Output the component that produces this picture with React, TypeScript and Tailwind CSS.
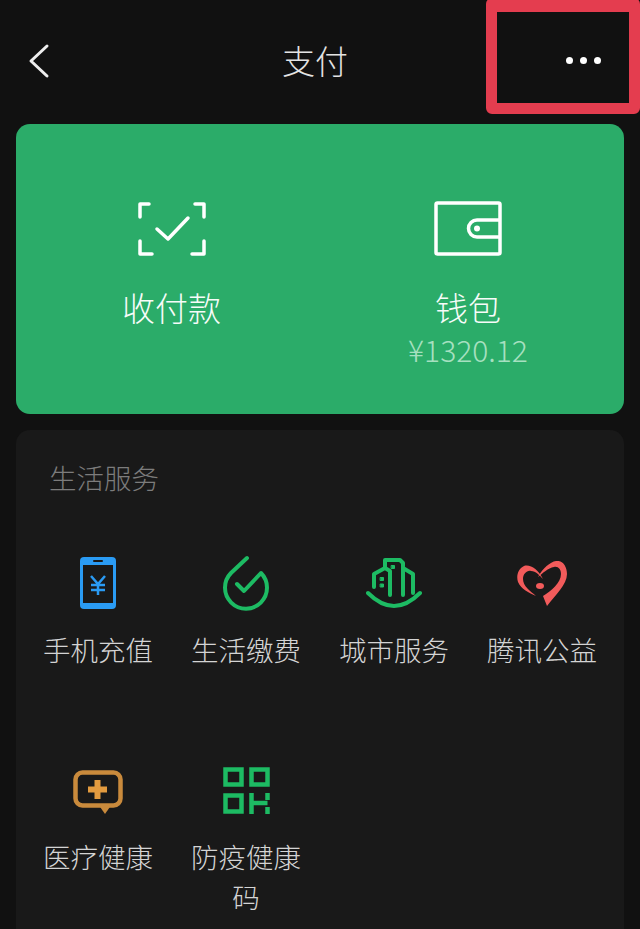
const font = { fontFamily: '"Noto Sans CJK SC", sans-serif' };

function ScanIcon() {
  return (
    <svg width="70" height="56" viewBox="0 0 70 56" fill="none" stroke="#fff" strokeWidth="3.5" strokeLinecap="round" strokeLinejoin="round">
      <path d="M12 3H3V16" />
      <path d="M58 3H67V16" />
      <path d="M3 40V53H15" />
      <path d="M67 40V53H55" />
      <path d="M20 28L31 38L51 17" />
    </svg>
  );
}

function WalletIcon() {
  return (
    <svg width="68" height="56" viewBox="0 0 68 56" fill="none" stroke="#fff" strokeWidth="3.5" strokeLinejoin="round">
      <rect x="2" y="2" width="64" height="51" rx="1.5" />
      <path d="M66 19H43a8.500 8.500 0 0 0 0 17H66" />
      <circle cx="43" cy="27.500" r="3" fill="#fff" stroke="none" />
    </svg>
  );
}

function PhoneIcon() {
  return (
    <svg width="36" height="52" viewBox="0 0 36 52">
      <rect width="36" height="52" rx="4" fill="#2a9bf4" />
      <rect x="3" y="8" width="30" height="38" fill="#191919" />
      <rect x="13" y="3" width="10" height="2" rx="1" fill="#191919" />
      <path d="M11 19L18 27L25 19M11 28H25M11 33H25M18 27V38" fill="none" stroke="#2a9bf4" strokeWidth="2.500" />
    </svg>
  );
}

function BillIcon() {
  return (
    <svg width="48" height="56" viewBox="0 0 48 56" fill="none" stroke="#1dbb63" strokeWidth="4" strokeLinecap="round" strokeLinejoin="round">
      <path d="M25 3L9 18A21 21 0 1 0 39 18L22 36L15 29" />
    </svg>
  );
}

function CityIcon() {
  return (
    <svg width="56" height="50" viewBox="0 0 56 50" fill="none" stroke="#1dbb63" strokeWidth="4" strokeLinecap="round" strokeLinejoin="round">
      <path d="M2 35Q28 61 54 35" />
      <path d="M8 29V16L19 10L24 13V37" />
      <path d="M19 10V2H34L37 5V37" />
      <path d="M37 10L47 16V35" />
      <rect x="25.500" y="7.500" width="3" height="3" fill="#1dbb63" strokeWidth="1" />
      <rect x="14.500" y="19.500" width="3" height="3" fill="#1dbb63" strokeWidth="1" />
      <rect x="14.500" y="26" width="3" height="3" fill="#1dbb63" strokeWidth="1" />
    </svg>
  );
}

function HeartIcon() {
  return (
    <svg width="50" height="45" viewBox="0 0 50 45" fill="#f25b5b">
      <path d="M26 18C21 8 13 3 7 5C1 8 -1 15 1 21C4 28 12 32 19 35C13 30 6 25 6 18C6 13 10 9 14 10C19 10 22 14 26 18Z" />
      <path d="M21 16C26 7 33 1 39 0C46 -1 50 6 50 13C50 24 38 34 30 45L26 35C34 30 44 22 44 13C44 8 41 5 37 6C31 7 26 12 21 16Z" />
      <ellipse cx="23" cy="25" rx="4" ry="3" />
    </svg>
  );
}

function MedicalIcon() {
  return (
    <svg className="mt-[5px]" width="50" height="46" viewBox="0 0 50 46" fill="none">
      <rect x="2.500" y="2.500" width="45" height="33" rx="7" stroke="#c98a3c" strokeWidth="4.500" />
      <path d="M25 34H39L32 44Z" fill="#c98a3c" />
      <path d="M24.500 10V29M15 19.500H34" stroke="#e39b3f" strokeWidth="6" />
    </svg>
  );
}

function QrIcon() {
  return (
    <svg width="47" height="47" viewBox="0 0 47 47" fill="none" stroke="#1dbb63" strokeWidth="4.500">
      <rect x="2.500" y="2.500" width="16" height="15" />
      <rect x="28.500" y="2.500" width="16" height="15" />
      <rect x="2.500" y="28.500" width="16" height="16" />
      <path d="M28.500 26V47M44.500 26V33M28.500 36H44.500M44.500 40V47" />
    </svg>
  );
}

const services = [
  { label: '手机充值', icon: <PhoneIcon /> },
  { label: '生活缴费', icon: <BillIcon /> },
  { label: '城市服务', icon: <CityIcon /> },
  { label: '腾讯公益', icon: <HeartIcon /> },
  { label: '医疗健康', icon: <MedicalIcon /> },
  { label: '防疫健康码', icon: <QrIcon /> },
];

export default function App() {
  return (
    <div className="relative flex h-[929px] flex-col overflow-hidden bg-[#111111]" style={font}>
      {/* Header */}
      <div className="relative flex h-[124px] shrink-0 items-center justify-center pb-[3px] pr-[10px]">
        <svg className="absolute left-[28px] top-[43px]" width="22" height="36" viewBox="0 0 22 36" fill="none" stroke="#eeeeee" strokeWidth="3" strokeLinecap="round" strokeLinejoin="round">
          <path d="M19 3L3 18L19 33" />
        </svg>
        <span className="text-[33px] font-light leading-none text-[#e4e4e4]">支付</span>
        <div className="absolute left-[566px] top-[57px] flex gap-[7px]">
          <span className="h-[7px] w-[7px] rounded-full bg-white" />
          <span className="h-[7px] w-[7px] rounded-full bg-white" />
          <span className="h-[7px] w-[7px] rounded-full bg-white" />
        </div>
      </div>

      {/* Annotation */}
      <div className="absolute left-[486px] top-[-2px] h-[116px] w-[154px] rounded-[6px] border-x-[11px] border-b-[11px] border-t-[14px] border-[#e43d4f]" />

      {/* Pay card */}
      <div className="mx-4 grid h-[290px] shrink-0 grid-cols-2 rounded-[14px] bg-[#2bac69] pt-[77px]">
        <div className="flex flex-col items-center pl-[7px]">
          <ScanIcon />
          <span className="mt-[28px] text-[33px] font-light leading-[44px] text-[#f7fcf9]">收付款</span>
        </div>
        <div className="flex flex-col items-center pr-[8px]">
          <WalletIcon />
          <span className="mt-[28px] text-[33px] font-light leading-[44px] text-[#f7fcf9]">钱包</span>
          <span className="text-[30px] font-light leading-[40px] text-[#a6e0c0]">¥1320.12</span>
        </div>
      </div>

      {/* Services */}
      <div className="mx-4 mt-[16px] flex-1 rounded-t-[14px] bg-[#191919] px-2 pt-[27px]">
        <div className="pl-[25px] text-[27.500px] font-light leading-[40px] text-[#7c7c7c]">生活服务</div>
        <div className="mt-[58px] grid grid-cols-4 gap-y-[93px]">
          {services.map((s) => (
            <div key={s.label} className="flex flex-col items-center">
              <div className="flex h-[56px] items-center justify-center">{s.icon}</div>
              <div className="mt-[18px] w-[112px] text-center text-[27.500px] font-light leading-[40px] text-[#d4d4d4]">{s.label}</div>
            </div>
          ))}
        </div>
      </div>
    </div>
  );
}
